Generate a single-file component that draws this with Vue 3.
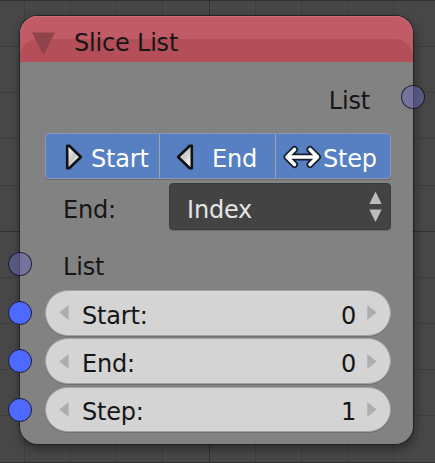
<script setup>
import { ref } from 'vue'

const toggles = [
  { label: 'Start', icon: 'right' },
  { label: 'End', icon: 'left' },
  { label: 'Step', icon: 'both' },
]
const fields = ref([
  { label: 'Start:', value: 0 },
  { label: 'End:', value: 0 },
  { label: 'Step:', value: 1 },
])
const cell = 46.15
const columns = Array.from({ length: 9 }, (_, i) => ({ pos: Math.round(23.9 + i * cell) + 0.5, major: i === 4 }))
const rows = Array.from({ length: 11 }, (_, i) => ({ pos: Math.round(i * cell) + 0.5, major: i % 5 === 0 }))
</script>

<template>
  <main class="editor">
    <svg class="grid" width="435" height="463">
      <line v-for="c in columns" :key="'c' + c.pos" :x1="c.pos" :x2="c.pos" y1="0" y2="463" :class="{ major: c.major }" />
      <line v-for="r in rows" :key="'r' + r.pos" x1="0" x2="435" :y1="r.pos" :y2="r.pos" :class="{ major: r.major }" />
    </svg>

    <section class="node">
      <header class="header">
        <div class="header-lower"></div>
        <svg class="collapse" width="24" height="24" viewBox="0 0 24 24"><path d="M0 0.5H23L11.5 23.5Z" /></svg>
        <span>Slice List</span>
      </header>

      <div class="output">List<i class="socket out soft"></i></div>

      <div class="toggles">
        <button v-for="t in toggles" :key="t.label" class="toggle" :class="t.icon">
          <svg v-if="t.icon === 'both'" width="38" height="24" viewBox="0 0 38 24" class="arrows">
            <path class="edge" d="M11.500 4.500L4 12L11.500 19.500M27 4.500L34.500 12L27 19.500M5 12H33" />
            <path class="core" d="M11.500 4.500L4 12L11.500 19.500M27 4.500L34.500 12L27 19.500M5 12H33" />
          </svg>
          <svg v-else width="18" height="28" viewBox="0 0 18 28" class="triangle">
            <defs>
              <linearGradient :id="'shine-' + t.icon" x1="0" y1="0" x2="1" y2="1">
                <stop offset="0.1" stop-color="#fff" />
                <stop offset="0.45" stop-color="#c8c8c8" />
                <stop offset="0.8" stop-color="#f2f2f2" />
              </linearGradient>
            </defs>
            <path :fill="`url(#shine-${t.icon})`" :d="t.icon === 'right' ? 'M2.200 2.800H4.200L15.900 14L4.200 25.200H2.200Z' : 'M15.800 2.800H13.800L2.100 14L13.800 25.200H15.800Z'" />
          </svg>
          <span>{{ t.label }}</span>
        </button>
      </div>

      <div class="choice">
        <label>End:</label>
        <div class="select">
          <span>Index</span>
          <svg width="13" height="32" viewBox="0 0 13 32"><path d="M6.500 0.500L12.700 13H0.300ZM0.300 18.500H12.700L6.500 31Z" /></svg>
        </div>
      </div>

      <div class="input-row">List<i class="socket in soft"></i></div>

      <div class="fields">
        <div v-for="f in fields" :key="f.label" class="field-row">
          <i class="socket in"></i>
          <div class="field">
            <svg width="10" height="15" viewBox="0 0 10 15"><path d="M9.600 0V15L0.300 7.500Z" /></svg>
            <span class="name">{{ f.label }}</span>
            <span class="value">{{ f.value }}</span>
            <svg width="10" height="15" viewBox="0 0 10 15"><path d="M0.300 0V15L9.600 7.500Z" /></svg>
          </div>
        </div>
      </div>
    </section>
  </main>
</template>

<style>
body { margin: 0; background: #474747; }
</style>

<style scoped>
* { box-sizing: border-box; }
.editor {
  position: relative;
  width: 435px;
  height: 463px;
  padding: 16px 22px 0 20px;
  overflow: hidden;
  background: #474747;
  font: 24px/28px "DejaVu Sans", sans-serif;
  letter-spacing: -0.2px;
  color: #161616;
}
.grid { position: absolute; inset: 0; }
.grid line { stroke: #3e3e3e; stroke-width: 1; }
.grid line.major { stroke: #303030; }
.node {
  position: relative;
  width: 393px;
  height: 427.500px;
  border-radius: 18px;
  background: rgba(132, 132, 132, 0.96);
  box-shadow: 0 0 0 1px rgba(20, 20, 20, 0.6), 1px 4px 10px 1px rgba(0, 0, 0, 0.38);
}
.header {
  position: relative;
  display: flex;
  height: 46px;
  padding: 13px 0 0 12px;
  overflow: hidden;
  border-radius: 18px 18px 0 0;
  background: #c15b66;
  box-shadow: inset 0 1px #cc6c75;
}
.header-lower {
  position: absolute;
  inset: 23px 0 0;
  border-radius: 18px 18px 0 0;
  background: #b44e58;
}
.collapse { position: relative; margin: 3px 18px 0 0; fill: #8f444b; }
.header span { position: relative; }
.output {
  position: relative;
  height: 71px;
  padding: 25px 43px 0 0;
  text-align: right;
}
.socket {
  position: absolute;
  width: 24px;
  height: 24px;
  border: 1px solid #1c1c28;
  border-radius: 50%;
  background: #4d69ff;
}
.socket.in { left: -12px; }
.socket.out { right: -12px; top: 23px; }
.socket.soft { background: rgba(104, 104, 180, 0.55); border-color: rgba(15, 15, 25, 0.8); }
.toggles {
  display: grid;
  grid-template-columns: 114px 116px 115px;
  width: 346px;
  height: 46px;
  margin-left: 25px;
  overflow: hidden;
  border: 1px solid #8c98b0;
  border-radius: 4px;
  background: #5680c2;
  box-shadow: 0 1px #6c6c6c;
}
.toggle {
  display: flex;
  align-items: center;
  padding: 3px 0 0;
  border: 0;
  border-right: 1px solid #a3a3a3;
  background: none;
  font: inherit;
  letter-spacing: inherit;
  color: #fff;
}
.toggle:last-child { border-right: 0; }
.toggle span { line-height: 28px; padding-top: 2px; }
.toggle svg { flex: none; margin-top: -2px; }
.right svg { margin-left: 19px; margin-right: 8px; }
.left svg { margin-left: 16px; margin-right: 18px; }
.both svg { margin-left: 7px; margin-right: 2px; }
.triangle path { stroke: #111; stroke-width: 2.600; stroke-linejoin: round; }
.arrows path { fill: none; stroke-linecap: round; stroke-linejoin: round; }
.arrows .edge { stroke: #14202e; stroke-width: 7; }
.arrows .core { stroke: #fff; stroke-width: 3.600; }
.choice {
  display: flex;
  justify-content: space-between;
  height: 47px;
  margin: 4px 22px 0 43px;
}
.choice label { padding-top: 13px; }
.select {
  display: flex;
  align-items: center;
  justify-content: space-between;
  width: 222px;
  padding: 0 8px 0 17px;
  border: 1px solid #3b3b3b;
  border-radius: 4px;
  background: #434343;
  box-shadow: 0 1px #6e6e6e;
  color: #e5e5e5;
}
.select span { padding-top: 6px; }
.select svg { fill: #bcbcbc; }
.input-row {
  position: relative;
  height: 60px;
  padding: 23px 0 0 43px;
}
.input-row .socket { top: 22px; }
.fields { display: grid; grid-auto-rows: 45.500px; gap: 2.900px; }
.field-row { position: relative; padding: 0 22px 0 25px; }
.field-row .socket { top: 11px; }
.field {
  display: flex;
  align-items: center;
  height: 100%;
  padding: 0 13px;
  border: 1px solid #a2a2a2;
  border-radius: 23px;
  background: #d4d4d4;
  box-shadow: 0 1px #707070;
}
.field span { padding-top: 5.500px; }
.field .name { flex: 1; padding-left: 13px; }
.field .value { padding-right: 11px; }
.field svg { fill: #adadad; }
</style>
